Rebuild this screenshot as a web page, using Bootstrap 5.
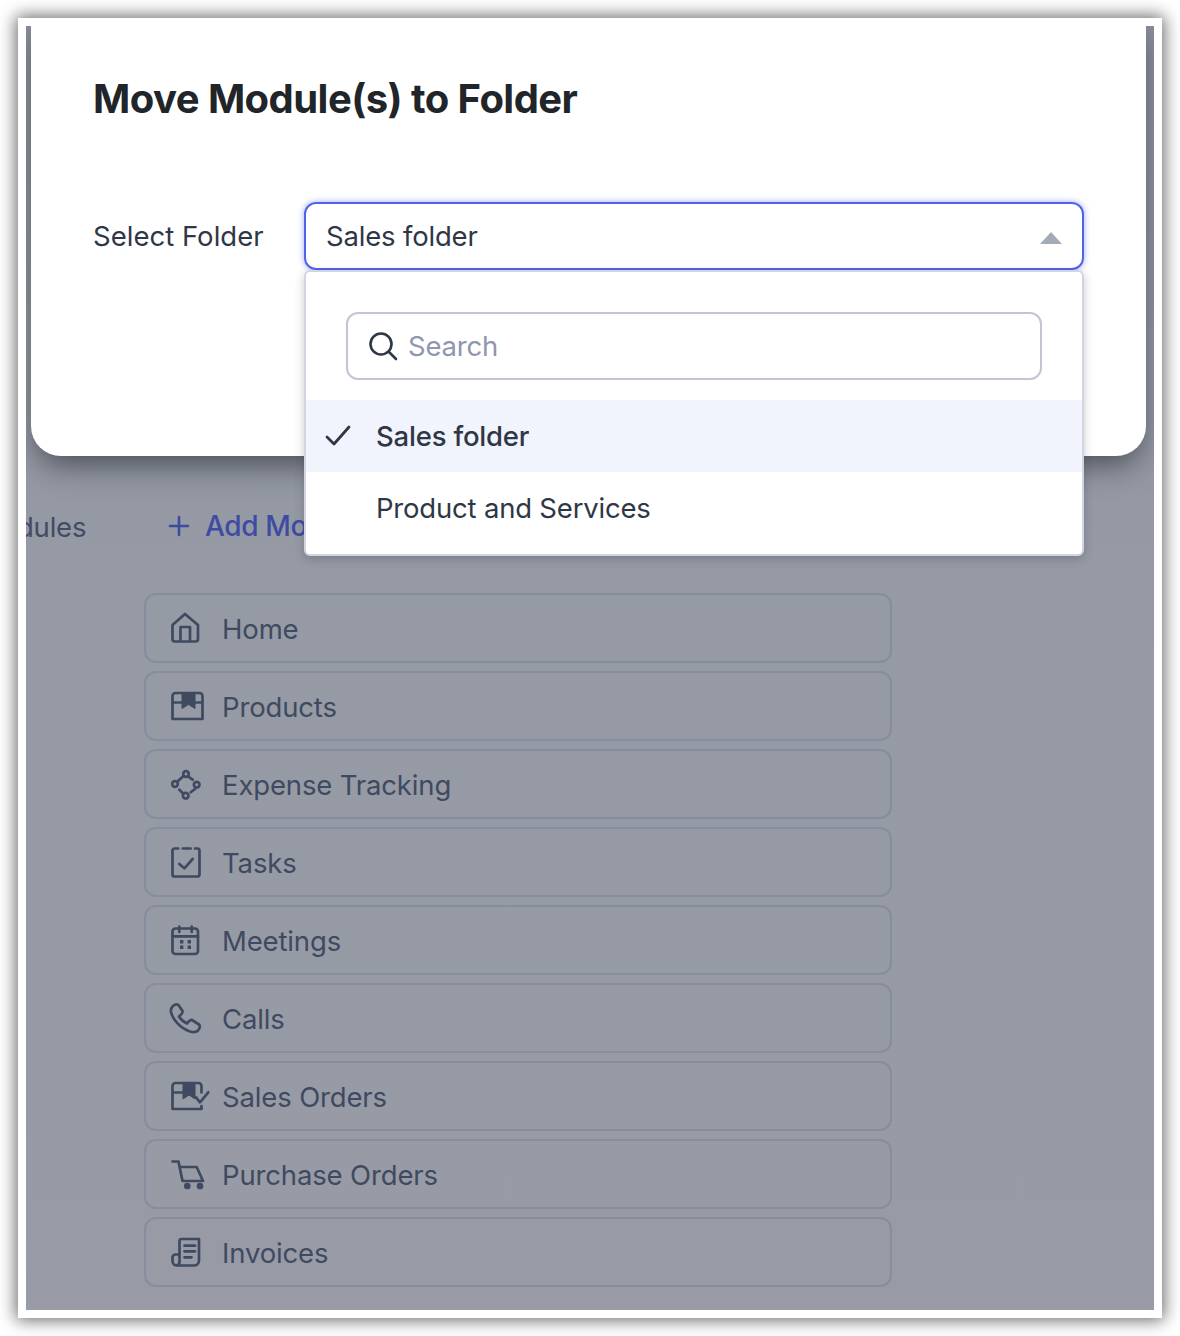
<!DOCTYPE html>
<html lang="en">
<head>
<meta charset="utf-8">
<title>Move Module(s) to Folder</title>
<link href="https://cdn.jsdelivr.net/npm/bootstrap@5.3.0/dist/css/bootstrap.min.css" rel="stylesheet">
<style>
html,body{margin:0;background:#fff;}
body{width:1180px;height:1336px;padding:18px;font-family:Inter,"Liberation Sans",sans-serif;overflow:hidden;}
.shot-frame{width:1144px;height:1300px;padding:8px;background:#fff;box-shadow:0 0 16px 2px rgba(0,0,0,.6);}
.stage{position:relative;width:1128px;height:1284px;overflow:hidden;background:linear-gradient(#8b8f9a 0,#959aa4 42%,#989ba5 100%);}
.dialog-box{position:absolute;left:5px;top:-10px;width:1115px;height:440px;background:#fff;border-radius:0 0 30px 30px;box-shadow:0 14px 30px -6px rgba(30,35,45,.65);padding:0 62px;}
.dialog-title{font-size:40px;font-weight:700;color:#212529;letter-spacing:-.55px;line-height:48px;margin:0;padding-top:59px;}
.field-row{margin-top:79px;height:68px;}
.field-label{width:211px;font-size:27.5px;letter-spacing:.02px;color:#2f3747;}
.select-box{width:780px;height:68px;border:2px solid #4f63ea;border-radius:12px;box-shadow:0 0 6px rgba(79,99,234,.55);padding:0 20px;font-size:27.5px;letter-spacing:-.18px;color:#2f3747;}
.caret-up{width:0;height:0;border-left:11px solid transparent;border-right:11px solid transparent;border-top:0;border-bottom:12px solid #a3aab8;}
.drop-panel{position:absolute;left:278px;top:244px;width:780px;height:286px;background:#fff;border:2px solid #d2d4e2;border-radius:6px;box-shadow:0 3px 10px rgba(40,45,60,.25);padding-top:40px;font-size:27.5px;letter-spacing:-.2px;color:#2f3747;}
.search-box{margin:0 40px;height:68px;border:2px solid #c3c5d4;border-radius:12px;padding:0 20px;gap:10px;color:#8f96b0;}
.opt-row{height:72px;padding-left:70px;position:relative;}
.opt-first{margin-top:20px;background:#f1f4fd;font-weight:500;}
.opt-check{position:absolute;left:19px;top:25px;}
.nudge-one{padding-top:2px;}
.nudge-two{padding-top:3px;}
.add-row{position:absolute;left:0;top:479px;width:280px;height:40px;}
.mod-text{position:absolute;left:-50px;top:2px;font-size:27.5px;letter-spacing:-.2px;color:#424c63;}
.add-text{position:absolute;left:142px;top:2px;display:flex;align-items:center;gap:15px;color:#3d4ba3;font-size:28px;font-weight:500;letter-spacing:-.35px;white-space:nowrap;line-height:38px;}
.mod-list{position:absolute;left:118px;top:567px;width:748px;gap:8px;}
.mod-item{height:70px;border:2px solid #878c9e;border-radius:12px;padding-left:23px;gap:19px;font-size:27.5px;letter-spacing:-.15px;color:#3f4a61;}
.mod-icon{width:34px;height:34px;flex:none;overflow:visible;fill:none;stroke:#3f4a61;stroke-width:2.7;stroke-linecap:round;stroke-linejoin:round;}
</style>
</head>
<body>
<div class="shot-frame">
<div class="stage">
  <div class="add-row">
    <span class="mod-text">Modules</span>
    <div class="add-text">
      <svg width="22" height="22" viewBox="0 0 22 22" fill="none" stroke="#3d4ba3" stroke-width="2.6" stroke-linecap="round"><path d="M11 2v18M2 11h18"/></svg>
      <span>Add Module</span>
    </div>
  </div>

  <div class="mod-list d-flex flex-column">
    <div class="mod-item d-flex align-items-center">
      <svg class="mod-icon" viewBox="0 0 34 34"><path d="M3.500 14 16 3l13 11v14a2.500 2.500 0 0 1-2.500 2.500H6A2.500 2.500 0 0 1 3.500 28z"/><path d="M11.500 30V16h9.500v14"/></svg>
      <span class="nudge-two">Home</span>
    </div>
    <div class="mod-item d-flex align-items-center">
      <svg class="mod-icon" viewBox="0 0 34 34"><path d="M3.500 13.500V7a3 3 0 0 1 3-3h24a3 3 0 0 1 3 3v6.500M3.500 13.500V30h30V13.500z"/><path d="M13 4v15.500l6.500-4 6.500 4V4z" fill="#3f4a61" stroke-width="1"/></svg>
      <span class="nudge-two">Products</span>
    </div>
    <div class="mod-item d-flex align-items-center">
      <svg class="mod-icon" viewBox="0 0 34 34"><circle cx="17" cy="7" r="2.800"/><circle cx="6" cy="17" r="2.800"/><circle cx="27.700" cy="17.700" r="2.800"/><circle cx="16.700" cy="28.700" r="2.800"/><path d="M9.300 13.700l4.400-4M20.300 10.300l3.400 2.400M26 22l-4.300 3.300M10.300 22.700l3.400 3.300"/></svg>
      <span class="nudge-two">Expense Tracking</span>
    </div>
    <div class="mod-item d-flex align-items-center">
      <svg class="mod-icon" viewBox="0 0 34 34"><path d="M9.300 3.500H5.500a2 2 0 0 0-2 2v24a2 2 0 0 0 2 2h23a2 2 0 0 0 2-2v-24a2 2 0 0 0-2-2H26M13.700 3.500h8"/><path d="m10.300 19 5 4.300L23.700 14"/></svg>
      <span class="nudge-two">Tasks</span>
    </div>
    <div class="mod-item d-flex align-items-center">
      <svg class="mod-icon" viewBox="0 0 34 34"><rect x="3.500" y="5.500" width="25.500" height="25.500" rx="3"/><path d="M3.500 13.300H29M10.300 3.700V9M22.700 3.700V9"/><path d="M11 18.700h3.400M18.600 18.700H22M11 24.300h3.400M18.600 24.300H22" stroke-width="3.400" stroke-linecap="butt"/></svg>
      <span class="nudge-two">Meetings</span>
    </div>
    <div class="mod-item d-flex align-items-center">
      <svg class="mod-icon" viewBox="0 0 34 34"><path d="M4 5c2-2 4-2 5.500-1l4 6c.5 1.500-.5 3-3.500 5.500 2 3.500 5 5.500 8 7 2-2.500 3.500-4 5-3.500l7 4.500c1.500 1.500 1 3.500-1 6-2 2-5 2-8 1C11 27 4 19 2 11c-.5-2.500.5-4.500 2-6z"/></svg>
      <span class="nudge-two">Calls</span>
    </div>
    <div class="mod-item d-flex align-items-center">
      <svg class="mod-icon" viewBox="0 0 34 34"><path d="M3.500 13.500V7a3 3 0 0 1 3-3h23a3 3 0 0 1 3 3v6.500M3.500 13.500V30h29v-3M3.500 13.500H25"/><path d="M14 4v16l6-4 6 4V4z" fill="#3f4a61" stroke-width="1"/><path d="m27 18.300 4 5 8.300-10"/></svg>
      <span class="nudge-two">Sales Orders</span>
    </div>
    <div class="mod-item d-flex align-items-center">
      <svg class="mod-icon" viewBox="0 0 34 34"><path d="M3.500 4.500h6l4 19.500H34L27.700 10H10.500"/><circle cx="18.300" cy="29" r="2" fill="#3f4a61"/><circle cx="31" cy="29" r="2" fill="#3f4a61"/></svg>
      <span class="nudge-two">Purchase Orders</span>
    </div>
    <div class="mod-item d-flex align-items-center">
      <svg class="mod-icon" viewBox="0 0 34 34"><path d="M10.500 24V6a2 2 0 0 1 2-2H30v21.500a5 5 0 0 1-5 5H8A4.500 4.500 0 0 1 3.500 26v-3.500a3 3 0 0 1 3-3h4M10.500 25.500a4.500 4.500 0 0 1-2.500 5"/><path d="M15.500 10.700H26M15.500 16.300H26M15.500 22.300h7"/></svg>
      <span class="nudge-two">Invoices</span>
    </div>
  </div>

  <div class="dialog-box">
    <h1 class="dialog-title">Move Module(s) to Folder</h1>
    <div class="field-row d-flex align-items-center">
      <div class="field-label nudge-one">Select Folder</div>
      <div class="select-box d-flex align-items-center justify-content-between">
        <span class="nudge-one">Sales folder</span>
        <span class="caret-up mt-1"></span>
      </div>
    </div>
  </div>

  <div class="drop-panel">
    <div class="search-box d-flex align-items-center">
      <svg width="30" height="30" viewBox="0 0 30 30" fill="none" stroke="#2f3747" stroke-width="2.600" stroke-linecap="round"><circle cx="13" cy="13" r="10.500"/><path d="m21 21 7 7"/></svg>
      <span class="nudge-one">Search</span>
    </div>
    <div class="opt-row opt-first d-flex align-items-center">
      <svg class="opt-check" width="26" height="22" viewBox="0 0 26 22" fill="none" stroke="#2f3747" stroke-width="2.800" stroke-linecap="round" stroke-linejoin="round"><path d="m2 12 7 7L24 2"/></svg>
      <span class="nudge-one">Sales folder</span>
    </div>
    <div class="opt-row d-flex align-items-center"><span class="nudge-one">Product and Services</span></div>
  </div>
</div>
</div>
<script src="https://cdn.jsdelivr.net/npm/bootstrap@5.3.0/dist/js/bootstrap.bundle.min.js"></script>
</body>
</html>
